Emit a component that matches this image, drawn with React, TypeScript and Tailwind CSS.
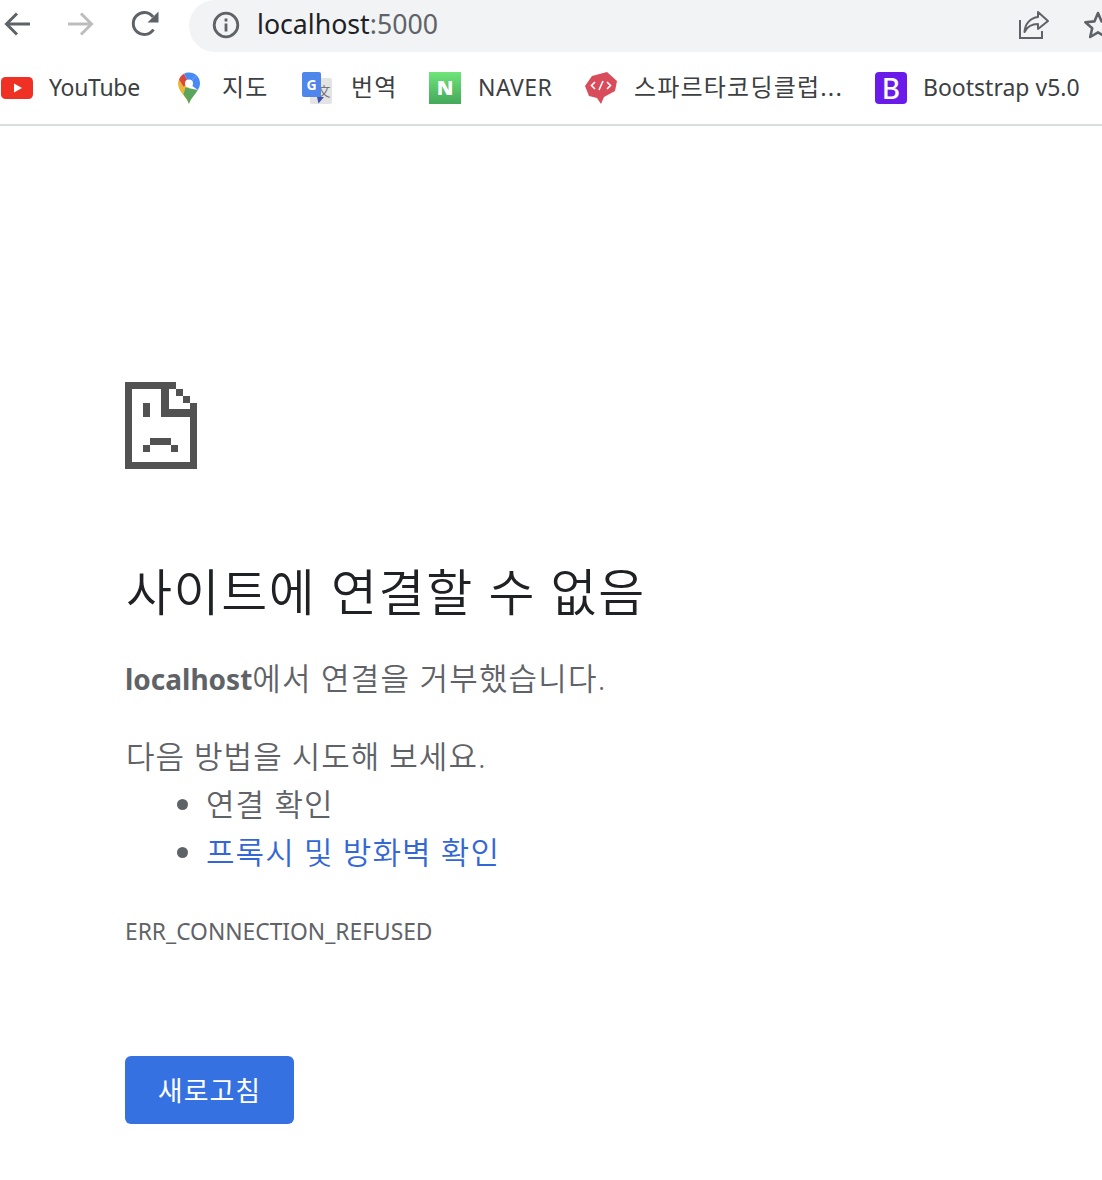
const FONT = 'font-["Noto_Sans","Noto_Sans_CJK_KR",sans-serif]';

function BackArrow({ color }: { color: string }) {
  return (
    <svg width="30" height="30" viewBox="0 0 30 30" fill="none" stroke={color} strokeWidth="3">
      <path d="M28 15H5" />
      <path d="M15 4.5L4.5 15L15 25.5" />
    </svg>
  );
}

function ForwardArrow({ color }: { color: string }) {
  return (
    <svg width="30" height="30" viewBox="0 0 30 30" fill="none" stroke={color} strokeWidth="3">
      <path d="M2 15H25" />
      <path d="M15 4.5L25.5 15L15 25.5" />
    </svg>
  );
}

function Reload() {
  return (
    <svg width="30" height="30" viewBox="0 0 30 30" fill="none">
      <path d="M23.5 20.5A11 11 0 1 1 23 7.8" stroke="#5f6368" strokeWidth="3" />
      <path d="M28.5 2.5V13.5H17.5Z" fill="#5f6368" />
    </svg>
  );
}

function InfoCircle() {
  return (
    <svg width="28" height="28" viewBox="0 0 28 28" fill="none">
      <circle cx="14" cy="14" r="11.8" stroke="#5f6368" strokeWidth="2.8" />
      <rect x="12.6" y="12.5" width="2.8" height="8" fill="#5f6368" />
      <rect x="12.6" y="7.5" width="2.8" height="3" fill="#5f6368" />
    </svg>
  );
}

function ShareIcon() {
  return (
    <svg width="32" height="30" viewBox="0 0 32 30" fill="none" stroke="#5f6368" strokeWidth="2">
      <path d="M2 10V28H24V21" />
      <path d="M20 2L30 11L20 19V14C13 14 9 17 6.5 22C7 14 12 8 20 7Z" strokeLinejoin="round" />
    </svg>
  );
}

function StarIcon() {
  return (
    <svg width="30" height="30" viewBox="0 0 30 30" fill="none" stroke="#5f6368" strokeWidth="2.6" className="shrink-0">
      <path d="M15 3L18.6 11.4L27.6 12.2L20.8 18.2L22.8 27L15 22.4L7.2 27L9.2 18.2L2.4 12.2L11.4 11.4Z" strokeLinejoin="round" />
    </svg>
  );
}

function YouTubeIcon() {
  return (
    <svg width="32" height="22" viewBox="0 0 32 22">
      <rect width="32" height="22" rx="4.5" fill="#ee3124" />
      <path d="M13 6.5L21 11L13 15.5Z" fill="#fff" />
    </svg>
  );
}

function MapsIcon() {
  return (
    <svg width="24" height="32" viewBox="0 0 24 32">
      <path d="M12 32C10 25 1 20 1 11.5C1 10 1.4 8.6 2 7.4L12 13Z" fill="#eab73a" />
      <path d="M2 7.4C3 5 4.8 3 7 1.8L12 11.5L6.5 14.5Z" fill="#d9483b" />
      <path d="M7 1.8C8.5 0.9 10.2 0.4 12 0.4C15 0.4 17.8 1.6 19.8 3.6L12 11.5Z" fill="#4a8af4" />
      <path d="M19.8 3.6C21.8 5.6 23 8.4 23 11.5C23 14 22 16 20.8 18L12 11.5Z" fill="#4a8af4" />
      <path d="M8.5 15.5L20.8 18C18 23 14 26 12 32C11 28.5 9 26 6.5 22.5Z" fill="#5aa55c" />
      <circle cx="12" cy="11.5" r="4" fill="#fff" />
    </svg>
  );
}

function TranslateIcon() {
  return (
    <div className="relative w-[30px] h-[32px] shrink-0">
      <div className="absolute left-[8px] top-[6px] w-[22px] h-[26px] rounded-[2px] bg-[#e4e4e4] flex items-center justify-center pl-[6px] text-[13px] leading-none text-[#777777]">
        文
      </div>
      <div className="absolute left-0 top-0 w-[19px] h-[25px] rounded-[2px] bg-[#4f86ec] flex items-center justify-center text-[14px] font-bold leading-none text-white">
        G
      </div>
      <svg className="absolute left-[15px] top-[25px]" width="9" height="7" viewBox="0 0 9 7">
        <path d="M0 0H7L1.5 6.5Z" fill="#3f51b5" />
      </svg>
    </div>
  );
}

function NaverIcon() {
  return (
    <div className="w-[32px] h-[32px] shrink-0 bg-gradient-to-b from-[#6fe57a] to-[#45a85a] flex items-center justify-center text-[20px] font-black leading-none text-white">
      N
    </div>
  );
}

function SpartaIcon() {
  return (
    <svg width="32" height="32" viewBox="0 0 32 32">
      <path d="M0 14L7 4L22 0L32 9L30 19L19 25L16 32L12 26L4 24Z" fill="#d84c5c" />
      <path d="M10 10L6.5 13.5L10 17M22 10L25.5 13.5L22 17M18 9L14 18" fill="none" stroke="#fff" strokeWidth="1.6" />
    </svg>
  );
}

function BootstrapIcon() {
  return (
    <div className="w-[32px] h-[32px] shrink-0 rounded-[4px] bg-[#6a1bea] flex items-center justify-center text-[28px] font-medium leading-none text-white">
      B
    </div>
  );
}

const KO = 'text-[24px] tracking-[1.2px]';
const EN = 'text-[23px]';

const BOOKMARKS = [
  { label: 'YouTube', icon: <YouTubeIcon />, width: 'w-[176px]', text: `w-[92px] ${EN} tracking-[-0.3px]`, gap: 'gap-[16px]' },
  { label: '지도', icon: <MapsIcon />, width: 'w-[125px]', text: `w-[46px] ${KO}`, gap: 'gap-[21px]' },
  { label: '번역', icon: <TranslateIcon />, width: 'w-[127px]', text: `w-[46px] ${KO}`, gap: 'gap-[19px]' },
  { label: 'NAVER', icon: <NaverIcon />, width: 'w-[156px]', text: `w-[75px] ${EN} tracking-[0.4px]`, gap: 'gap-[17px]' },
  { label: '스파르타코딩클럽...', icon: <SpartaIcon />, width: 'w-[290px]', text: `w-[210px] ${KO}`, gap: 'gap-[17px]' },
  { label: 'Bootstrap v5.0', icon: <BootstrapIcon />, width: 'w-[227px]', text: `w-[160px] ${EN}`, gap: 'gap-[16px]' },
];

function PixelFile() {
  return (
    <svg width="72" height="87" viewBox="30 20 217 263" fill="#525252" shapeRendering="crispEdges">
      <path d="M30 20H183V42H162V103H247V283H30ZM52 42V262H226V125H140V42Z" fillRule="evenodd" />
      <rect x="183" y="42" width="22" height="21" />
      <rect x="205" y="63" width="21" height="21" />
      <rect x="226" y="84" width="21" height="41" />
      <rect x="84" y="84" width="21" height="41" />
      <rect x="105" y="190" width="65" height="20" />
      <rect x="84" y="210" width="21" height="21" />
      <rect x="170" y="210" width="21" height="21" />
    </svg>
  );
}

export default function App() {
  return (
    <div className={`${FONT} w-[1102px] h-[1180px] overflow-hidden bg-white`}>
      {/* Browser chrome */}
      <header className="h-[126px] border-b-2 border-[#dadce0]">
        <div className="h-[52px] flex items-center">
          <div className="w-[189px] shrink-0 flex items-center pl-[2px] pb-[4px] gap-[34px]">
            <BackArrow color="#5f6368" />
            <ForwardArrow color="#bdbdbd" />
            <Reload />
          </div>
          <div className="flex-1 h-[52px] rounded-l-[26px] bg-[#f1f3f4] flex items-center pl-[23px] pb-[2px]">
            <InfoCircle />
            <span className="ml-[17px] text-[26.7px] leading-none text-[#202124] pb-[2px]">
              localhost<span className="text-[#5f6368]">:5000</span>
            </span>
            <div className="ml-auto flex items-center gap-[33px] -mr-[11px]">
              <ShareIcon />
              <StarIcon />
            </div>
          </div>
        </div>
        <nav className="h-[72px] flex items-center pl-[1px]">
          {BOOKMARKS.map((b) => (
            <div key={b.label} className={`${b.width} ${b.gap} shrink-0 flex items-center`}>
              {b.icon}
              <span className={`${b.text} pb-[2px] whitespace-nowrap leading-none text-[#3c4043]`}>{b.label}</span>
            </div>
          ))}
        </nav>
      </header>

      {/* Error page */}
      <main className="pl-[125px] pt-[256px]">
        <PixelFile />
        <h1 className="mt-[93px] pl-[1px] text-[50px] leading-[60px] tracking-[1.6px] font-[350] text-[#202124] whitespace-nowrap">
          사이트에 연결할 수 없음
        </h1>
        <p className="mt-[32px] text-[31px] leading-[48px] tracking-[1.2px] font-[350] text-[#5f6368] whitespace-nowrap">
          <strong className="text-[28px] tracking-normal font-bold">localhost</strong>에서 연결을 거부했습니다.
        </p>
        <p className="mt-[29px] pl-[1px] text-[31px] leading-[48px] tracking-[1px] font-[350] text-[#5f6368] whitespace-nowrap">
          다음 방법을 시도해 보세요.
        </p>
        <ul className="list-disc pl-[81px] text-[31px] leading-[48px] tracking-[1.1px] font-[350] text-[#5f6368] whitespace-nowrap">
          <li>연결 확인</li>
          <li>
            <span className="text-[#3367d6]">프록시 및 방화벽 확인</span>
          </li>
        </ul>
        <div className="mt-[38px] text-[22.8px] leading-[36px] text-[#5f6368]">ERR_CONNECTION_REFUSED</div>
        <button className="mt-[106px] block w-[169px] h-[68px] rounded-[6px] bg-[#3571e1] pt-[2px] text-[27px] tracking-[1px] text-white">
          새로고침
        </button>
      </main>
    </div>
  );
}
